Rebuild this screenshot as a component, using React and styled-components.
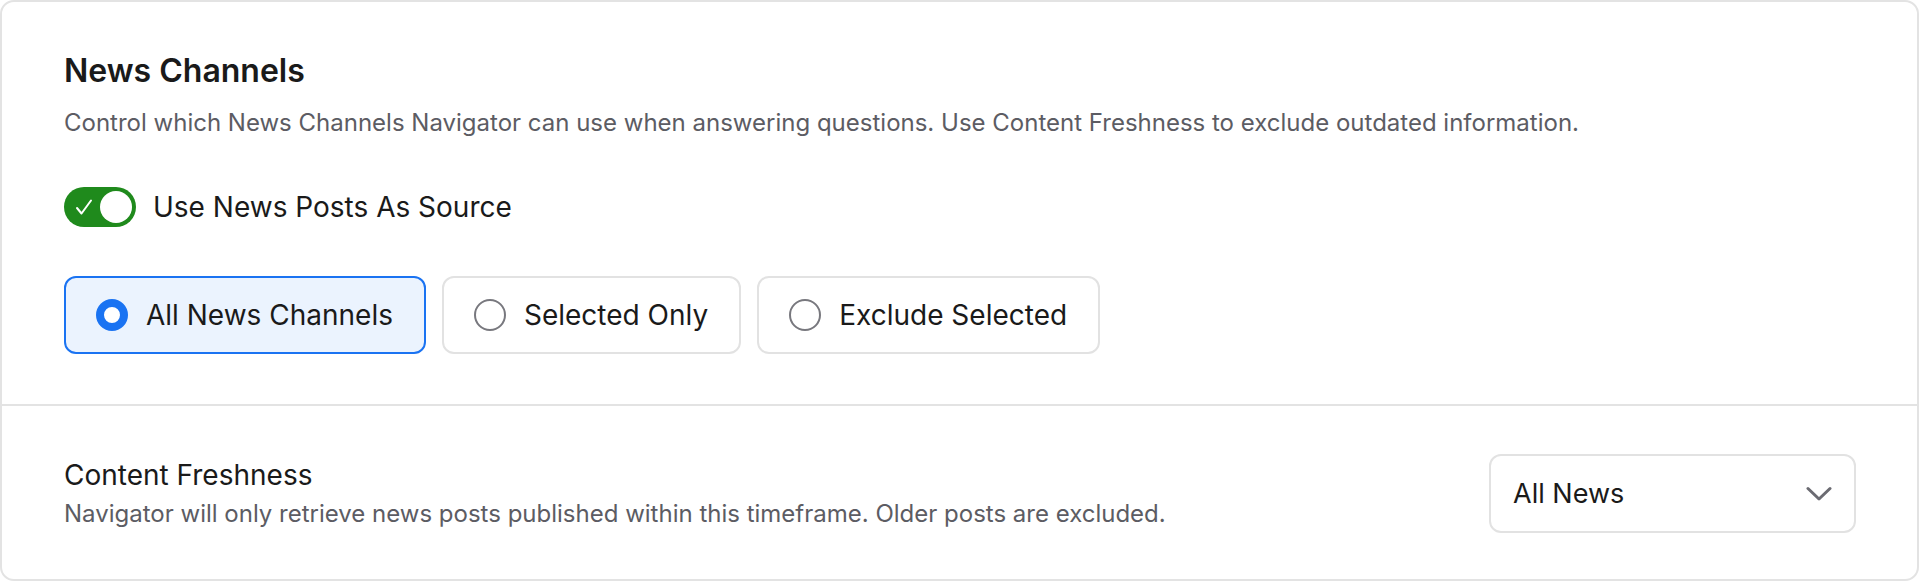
import React, { useState } from 'react';
import styled, { createGlobalStyle } from 'styled-components';

const GlobalStyle = createGlobalStyle`
  html, body {
    margin: 0;
    padding: 0;
    background: #ffffff;
  }
  body {
    font-family: Inter, "Noto Sans", "Liberation Sans", sans-serif;
    color: #1a1a1a;
  }
  * { box-sizing: border-box; }
`;

const Page = styled.div`
  padding: 0 1px 1px 0;
`;

const Card = styled.div`
  border: 2px solid #e3e3e3;
  border-radius: 14px;
  background: #ffffff;
`;

const TopSection = styled.section`
  padding: 50px 62px 50px;
  border-bottom: 2px solid #e3e3e3;
`;

const Title = styled.h2`
  margin: 0;
  font-size: 32px;
  line-height: 38px;
  font-weight: 600;
  color: #1a1a1a;
`;

const Description = styled.p`
  margin: ${(p) => p.$gap || 0}px 0 0;
  font-size: 24px;
  line-height: 32px;
  color: #5c5c63;
`;

const ToggleRow = styled.label`
  display: flex;
  align-items: center;
  gap: 17px;
  margin-top: 48px;
  font-size: 28px;
  line-height: 40px;
  color: #1a1a1a;
  cursor: pointer;
`;

const Switch = styled.button`
  position: relative;
  width: 72px;
  height: 40px;
  padding: 4px;
  border: none;
  border-radius: 20px;
  background: ${(p) => (p.$on ? '#1f8a1c' : '#c7c7cc')};
  display: flex;
  align-items: center;
  justify-content: ${(p) => (p.$on ? 'flex-end' : 'flex-start')};
  cursor: pointer;

  svg {
    position: absolute;
    left: 11px;
    top: 11px;
  }
`;

const Knob = styled.span`
  width: 32px;
  height: 32px;
  border-radius: 50%;
  background: #ffffff;
`;

const RadioGroup = styled.div`
  display: flex;
  gap: 16px;
  margin-top: 49px;
`;

const RadioOption = styled.button`
  display: flex;
  align-items: center;
  gap: 18px;
  height: 78px;
  padding: 0 31px 0 30px;
  border: 2px solid ${(p) => (p.$active ? '#1a73f2' : '#e2e2e2')};
  border-radius: 12px;
  background: ${(p) => (p.$active ? '#ebf3fe' : '#ffffff')};
  font-family: inherit;
  font-size: 28px;
  color: #1a1a1a;
  cursor: pointer;
`;

const RadioDot = styled.span`
  width: 32px;
  height: 32px;
  border-radius: 50%;
  flex-shrink: 0;
  background: #ffffff;
  border: ${(p) => (p.$active ? '8.5px solid #1a73f2' : '2px solid #78787e')};
`;

const BottomSection = styled.section`
  display: flex;
  align-items: center;
  justify-content: space-between;
  padding: 48px 61px 46px 62px;
`;

const SubTitle = styled.h3`
  margin: 0;
  font-size: 28px;
  line-height: 36px;
  font-weight: 400;
  color: #1a1a1a;
`;

const Select = styled.button`
  width: 367px;
  height: 79px;
  display: flex;
  align-items: center;
  justify-content: space-between;
  padding: 0 22px 0 22px;
  border: 2px solid #e2e2e2;
  border-radius: 12px;
  background: #ffffff;
  font-family: inherit;
  font-size: 27px;
  color: #1a1a1a;
  cursor: pointer;
`;

const options = [
  { id: 'all', label: 'All News Channels' },
  { id: 'selected', label: 'Selected Only' },
  { id: 'exclude', label: 'Exclude Selected' },
];

export default function App() {
  const [on, setOn] = useState(true);
  const [mode, setMode] = useState('all');

  return (
    <Page>
      <GlobalStyle />
      <Card>
        <TopSection>
          <Title>News Channels</Title>
          <Description $gap={17}>
            Control which News Channels Navigator can use when answering questions. Use Content Freshness to exclude outdated information.
          </Description>
          <ToggleRow>
            <Switch $on={on} onClick={() => setOn(!on)} aria-label="Toggle news posts">
              {on && (
                <svg width="18" height="18" viewBox="0 0 18 18" fill="none">
                  <path d="M2 10 L6.5 15.5 L16 2.5" stroke="#ffffff" strokeWidth="2" strokeLinecap="round" strokeLinejoin="round" />
                </svg>
              )}
              <Knob />
            </Switch>
            Use News Posts As Source
          </ToggleRow>
          <RadioGroup>
            {options.map((o) => (
              <RadioOption key={o.id} $active={mode === o.id} onClick={() => setMode(o.id)}>
                <RadioDot $active={mode === o.id} />
                {o.label}
              </RadioOption>
            ))}
          </RadioGroup>
        </TopSection>
        <BottomSection>
          <div>
            <SubTitle>Content Freshness</SubTitle>
            <Description $gap={5}>
              Navigator will only retrieve news posts published within this timeframe. Older posts are excluded.
            </Description>
          </div>
          <Select>
            All News
            <svg width="26" height="16" viewBox="0 0 26 16" fill="none">
              <path d="M2 2.5 L13 13 L24 2.5" stroke="#6b6b72" strokeWidth="3" strokeLinecap="round" strokeLinejoin="round" />
            </svg>
          </Select>
        </BottomSection>
      </Card>
    </Page>
  );
}
